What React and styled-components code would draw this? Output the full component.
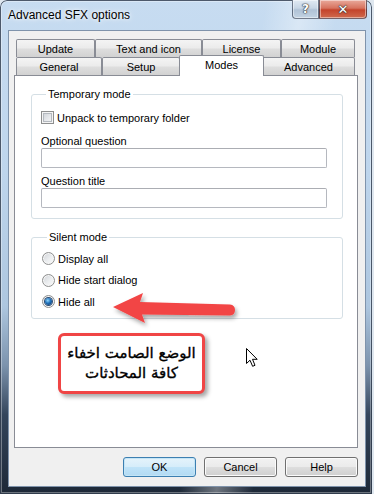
import React from "react";
import styled, { createGlobalStyle } from "styled-components";

const GlobalStyle = createGlobalStyle`
  html, body {
    margin: 0;
    padding: 0;
    background: #dfe7ef;
  }
  body {
    font-family: "Liberation Sans", Arial, sans-serif;
    font-size: 11px;
    color: #000;
  }
  * { box-sizing: border-box; }
`;

const Window = styled.div`
  width: 372px;
  height: 494px;
  display: flex;
  flex-direction: column;
  padding: 0 6px 7px 8px;
  border-radius: 7px 7px 0 0;
  background:
    linear-gradient(100deg, rgba(255,255,255,0) 58%, rgba(255,255,255,0.35) 66%, rgba(255,255,255,0) 74%),
    linear-gradient(180deg, #c7dcf1 0%, #bed5ec 35%, #adc6df 62%, #7c93ad 74%, #34455b 84%, #1d2837 100%);
  box-shadow: inset 0 0 0 1px rgba(30, 42, 60, 0.75), inset 0 0 0 2px rgba(255, 255, 255, 0.35);
`;

const TitleBar = styled.div`
  height: 30px;
  display: flex;
  justify-content: space-between;
  align-items: flex-start;
  margin-right: -1px;
`;

const Title = styled.div`
  font-family: "Liberation Sans", Arial, sans-serif;
  font-size: 12px;
  line-height: 30px;
  color: #000;
  text-shadow: 0 0 6px #fff, 0 0 3px rgba(255, 255, 255, 0.9);
`;

const CaptionGroup = styled.div`
  display: flex;
`;

const CaptionButton = styled.div`
  width: ${(p) => p.$w}px;
  height: 19px;
  display: flex;
  align-items: center;
  justify-content: center;
  border: 1px solid rgba(40, 50, 70, 0.6);
  border-top: none;
  font-family: "DejaVu Sans", sans-serif;
  font-weight: bold;
  color: #fff;
  font-size: ${(p) => (p.$close ? 13 : 12)}px;
  text-shadow: 0 0 1px #333, 0 0 2px #444, 0 0 1px #000;
  border-radius: ${(p) => (p.$close ? "0 0 4px 0" : "0 0 0 4px")};
  box-shadow: inset 0 0 0 1px rgba(255, 255, 255, 0.45);
  background: ${(p) =>
    p.$close
      ? "linear-gradient(180deg, #e9a99b 0%, #d7735f 45%, #c4432b 55%, #cf6a4e 100%)"
      : "linear-gradient(180deg, #e1eaf3 0%, #c8d6e5 45%, #b0c2d6 55%, #c3d3e3 100%)"};
`;

const Client = styled.div`
  flex: 1;
  display: flex;
  flex-direction: column;
  background: #f0f0f0;
  border: 1px solid #7f93ab;
  padding: 8px 7px 9px 5px;
`;

const TabStrip = styled.div`
  display: flex;
  flex-direction: column;
  padding-left: 2px;
`;

const TabRow = styled.div`
  display: flex;
  height: 18px;
`;

const Tab = styled.div`
  width: ${(p) => p.$w}px;
  height: ${(p) => (p.$active ? 21 : 18)}px;
  margin: ${(p) => (p.$active ? "-2px -2px -1px -1px" : "0")};
  position: ${(p) => (p.$active ? "relative" : "static")};
  z-index: ${(p) => (p.$active ? 2 : 0)};
  display: flex;
  justify-content: center;
  align-items: ${(p) => (p.$active ? "flex-start" : "center")};
  padding-top: ${(p) => (p.$active ? "3px" : "1px")};
  border: 1px solid #898c95;
  border-bottom: none;
  border-radius: 2px 2px 0 0;
  background: ${(p) =>
    p.$active
      ? "#fff"
      : "linear-gradient(180deg, #f4f4f4 0%, #ebebeb 48%, #dedede 52%, #d2d2d2 100%)"};
  font-size: 11px;
  line-height: 13px;
  color: #000;
`;

const Panel = styled.div`
  position: relative;
  flex: 1;
  background: #fff;
  border: 1px solid #898c95;
  padding: 12px 14px 0 16px;
  display: flex;
  flex-direction: column;
`;

const Group = styled.fieldset`
  margin: ${(p) => (p.$first ? 0 : "12px 0 0 0")};
  padding: ${(p) => p.$pad};
  border: 1px solid #d5dfe5;
  border-radius: 3px;
  min-width: 0;
  display: flex;
  flex-direction: column;
`;

const Legend = styled.legend`
  margin-left: 5px;
  padding: 0 2px;
  font-size: 11px;
  line-height: 13px;
  color: #000;
`;

const CheckRow = styled.label`
  display: flex;
  align-items: center;
  gap: 3px;
  height: ${(p) => p.$h}px;
  font-size: 11px;
  color: #000;
`;

const CheckBox = styled.span`
  width: 13px;
  height: 13px;
  flex: none;
  border: 1px solid #8e8f8f;
  background: linear-gradient(135deg, #c9cdd3 0%, #e6e8eb 55%, #f8f8f8 100%);
  box-shadow: inset 0 0 0 1px #f4f4f4, inset 0 0 0 2px #b4b9bf;
`;

const Radio = styled.span`
  width: 13px;
  height: 13px;
  flex: none;
  border-radius: 50%;
  border: 1px solid #8e8f8f;
  background: linear-gradient(135deg, #cfd2d6 0%, #eceef0 55%, #fbfbfb 100%);
  box-shadow: inset 0 0 0 1px #f6f6f6;
  display: flex;
  align-items: center;
  justify-content: center;
  &::after {
    content: "";
    display: ${(p) => (p.$checked ? "block" : "none")};
    width: 7px;
    height: 7px;
    border-radius: 50%;
    background: radial-gradient(circle at 40% 35%, #8fd8ff 0%, #1f6fb8 45%, #0a2f5e 100%);
    box-shadow: 0 0 0 1px #2c4c72;
  }
`;

const FieldLabel = styled.div`
  margin-top: ${(p) => p.$mt}px;
  font-size: 11px;
  line-height: 13px;
  color: #000;
`;

const TextBox = styled.div`
  height: 20px;
  width: 100%;
  background: #fff;
  border: 1px solid #b5b8bf;
  border-top-color: #abadb3;
  border-radius: 2px;
`;

const Callout = styled.div`
  margin: 14px 0 0 27px;
  width: 147px;
  height: 61px;
  border: 3px solid #f04545;
  border-radius: 6px;
  background: #fff;
  box-shadow: 3px 3px 4px rgba(0, 0, 0, 0.35);
  display: flex;
  align-items: center;
  justify-content: center;
  direction: rtl;
  text-align: center;
  white-space: nowrap;
  font-family: "DejaVu Sans", sans-serif;
  font-size: 15px;
  line-height: 20px;
  color: #000;
  -webkit-text-stroke: 0.35px #000;
`;

const ArrowSvg = styled.svg`
  position: absolute;
  left: 95px;
  top: 210px;
  overflow: visible;
`;

const CursorSvg = styled.svg`
  position: absolute;
  left: 231px;
  top: 272px;
`;

const ButtonRow = styled.div`
  margin-top: 9px;
  display: flex;
  justify-content: flex-end;
  gap: 8px;
`;

const Button = styled.div`
  width: 73px;
  height: 20px;
  display: flex;
  align-items: center;
  justify-content: center;
  border-radius: 3px;
  font-size: 11px;
  color: #000;
  border: 1px solid ${(p) => (p.$default ? "#3c7fb1" : "#707070")};
  box-shadow: inset 0 0 0 1px ${(p) => (p.$default ? "#c4e5f6" : "#fbfbfb")};
  background: ${(p) =>
    p.$default
      ? "linear-gradient(180deg, #e5f3fb 0%, #d6edfa 48%, #bfe3f8 52%, #b2daf3 100%)"
      : "linear-gradient(180deg, #f2f2f2 0%, #ebebeb 48%, #dddddd 52%, #cfcfcf 100%)"};
`;

const row1 = [
  ["Update", 79],
  ["Text and icon", 107],
  ["License", 79],
  ["Module", 74],
];
const row2 = [
  ["General", 86],
  ["Setup", 78],
  ["Modes", 85, true],
  ["Advanced", 93],
];

export default function App() {
  return (
    <>
      <GlobalStyle />
      <Window>
        <TitleBar>
          <Title>Advanced SFX options</Title>
          <CaptionGroup>
            <CaptionButton $w={27}>?</CaptionButton>
            <CaptionButton $w={48} $close>✕</CaptionButton>
          </CaptionGroup>
        </TitleBar>
        <Client>
          <TabStrip>
            <TabRow>
              {row1.map(([t, w]) => (
                <Tab key={t} $w={w}>{t}</Tab>
              ))}
            </TabRow>
            <TabRow>
              {row2.map(([t, w, a]) => (
                <Tab key={t} $w={w} $active={a}>{t}</Tab>
              ))}
            </TabRow>
          </TabStrip>
          <Panel>
            <Group $first $pad="10px 15px 10px 9px">
              <Legend>Temporary mode</Legend>
              <CheckRow $h={13}>
                <CheckBox />
                Unpack to temporary folder
              </CheckRow>
              <FieldLabel $mt={11}>Optional question</FieldLabel>
              <TextBox />
              <FieldLabel $mt={7}>Question title</FieldLabel>
              <TextBox />
            </Group>
            <Group $pad="4px 15px 5px 10px">
              <Legend>Silent mode</Legend>
              <CheckRow $h={21.5}>
                <Radio />
                Display all
              </CheckRow>
              <CheckRow $h={21.5}>
                <Radio />
                Hide start dialog
              </CheckRow>
              <CheckRow $h={21.5}>
                <Radio $checked />
                Hide all
              </CheckRow>
            </Group>
            <Callout>
              <div>
                الوضع الصامت اخفاء
                <br />
                كافة المحادثات
              </div>
            </Callout>
            <ArrowSvg width="130" height="44" viewBox="0 0 130 44">
              <defs>
                <filter id="arrowShadow" x="-20%" y="-40%" width="140%" height="200%">
                  <feDropShadow dx="2" dy="3" stdDeviation="2" floodColor="#000" floodOpacity="0.35" />
                </filter>
              </defs>
              <path
                d="M3 21 L33 7 L30 16 L120 18.5 Q125 19 125 24 Q125 29 120 29.5 L32 28.5 L35 37 Z"
                fill="#f24545"
                filter="url(#arrowShadow)"
              />
            </ArrowSvg>
            <CursorSvg width="13" height="20" viewBox="0 0 13 20">
              <path
                d="M0.5 0.5 L0.5 15.5 L4 12.2 L6.6 18.3 L9 17.3 L6.5 11.3 L11.2 11.3 Z"
                fill="#fff"
                stroke="#000"
                strokeWidth="1"
                strokeLinejoin="miter"
              />
            </CursorSvg>
          </Panel>
          <ButtonRow>
            <Button $default>OK</Button>
            <Button>Cancel</Button>
            <Button>Help</Button>
          </ButtonRow>
        </Client>
      </Window>
    </>
  );
}
